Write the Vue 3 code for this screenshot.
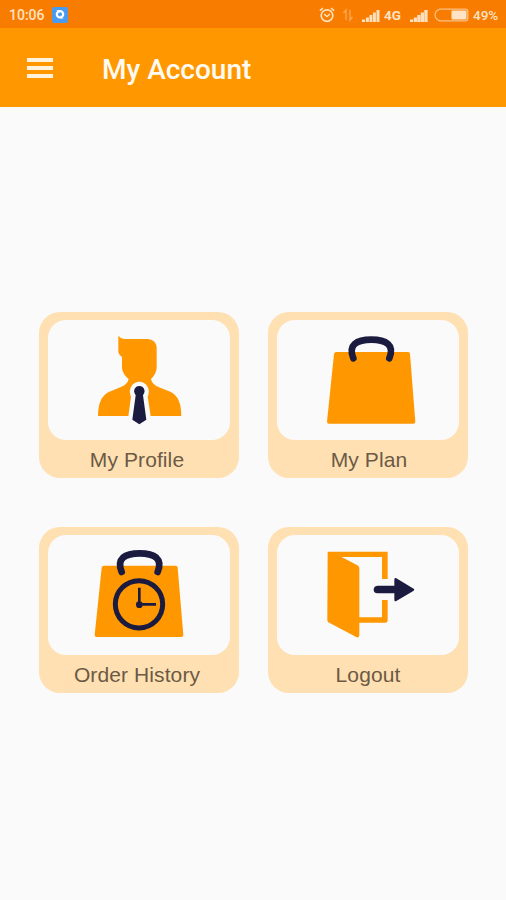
<script setup>
const items = [
  { id: 'profile', label: 'My Profile' },
  { id: 'plan', label: 'My Plan' },
  { id: 'history', label: 'Order History' },
  { id: 'logout', label: 'Logout' },
]
</script>

<template>
  <div class="screen">
    <div class="status">
      <span class="time">10:06</span>
      <svg class="app-icon" width="16" height="16" viewBox="0 0 16 16">
        <rect width="16" height="16" rx="2" fill="#4a9af0" />
        <path d="M4.500 3.200h3v3zM11.500 11.400h-3v-3z" fill="#fff" />
        <circle cx="8" cy="7.300" r="3.200" fill="none" stroke="#fff" stroke-width="2.200" />
      </svg>
      <div class="spacer"></div>
      <svg class="alarm" width="16" height="16" viewBox="0 0 16 16" fill="none" stroke="#ffe0bd">
        <circle cx="8" cy="8.600" r="5.800" stroke-width="1.700" />
        <path d="M.9 3.600L4 1.100M15.100 3.600L12 1.100" stroke-width="1.700" />
        <path d="M5.200 7.200L8 9.500l3-2.500" stroke-width="1.600" />
      </svg>
      <svg class="arrows" width="12" height="14" viewBox="0 0 12 14" fill="none" stroke="#fba650" stroke-width="1.400">
        <path d="M4 12V2L1.500 5M8 2v10L10.500 9" />
      </svg>
      <svg class="signal" width="18" height="13" viewBox="0 0 18 13" fill="#ffe0bd">
        <path d="M0 10.500h3.200V13H0zM4 8.500h2.900V13H4zM7.500 6h2.900v7H7.500zM11 3.500h2.900V13H11zM14.500 1h3v12h-3z" />
      </svg>
      <span class="net">4G</span>
      <svg class="signal second" width="18" height="13" viewBox="0 0 18 13" fill="#ffe0bd">
        <path d="M0 10.500h3.200V13H0zM3.800 8.500H7V13H3.800zM7.300 6h3.200v7H7.300zM10.800 3.500h3.200V13h-3.200zM14.300 1h3.300v12h-3.300z" />
      </svg>
      <svg class="battery" width="35" height="14" viewBox="0 0 35 14">
        <path d="M6 1.200h25.500q2.300 0 2.300 2.300v7q0 2.300-2.300 2.300H6Q1.200 11.500 1 7 1.200 2.500 6 1.200z" fill="none" stroke="#fcc084" stroke-width="1.300" />
        <rect x="17.500" y="2.500" width="15" height="9" rx="1" fill="#ffe3c4" />
      </svg>
      <span class="percent">49%</span>
    </div>

    <header class="toolbar">
      <button class="menu" aria-label="Menu">
        <i></i>
        <i></i>
        <i></i>
      </button>
      <h1>My Account</h1>
    </header>

    <main class="grid">
      <div v-for="item in items" :key="item.id" class="card">
        <div class="picture">
          <svg v-if="item.id === 'profile'" viewBox="39 36 546 360">
            <path
              fill="#ff9800"
              d="M250 83q7 9 17 10h72q26 3 26 28v60q-2 18-17 32 3 16 24 25l34 13q33 15 33 73H189q0-58 34-73l33-13q22-9 25-25-18-14-20-32v-34q-12-8-11-20z"
            />
            <path fill="#fafafa" d="M280 325l8-59q-8-18 2-33 9-12 23-12t23 12q10 15 2 33l9 59v6h-67z" />
            <path fill="#1b1b40" d="M304 236q9-4 18 0 12 10 2 26l10 73-21 14-21-14 10-73q-10-16 2-26z" />
          </svg>

          <svg v-else-if="item.id === 'plan'" viewBox="39 36 546 360">
            <path fill="#ff9800" d="M217 132h215q6 0 6 6l16 203q0 6-6 6H195q-6 0-6-6l21-203q1-6 7-6z" />
            <path class="handle" d="M268 151c-8-20-6-34 4-43 12-10 30-13 50-13s38 3 50 13c10 9 12 23 4 43" />
          </svg>

          <svg v-else-if="item.id === 'history'" viewBox="39 36 546 360">
            <path fill="#ff9800" d="M207 128h215q6 0 6 6l17 202q0 6-6 6H185q-6 0-6-6l21-202q1-6 7-6z" />
            <path class="handle" d="M260 147c-8-20-6-34 4-43 12-10 30-13 50-13s38 3 50 13c10 9 12 23 4 43" />
            <circle cx="312" cy="244" r="71" fill="none" stroke="#1b1b40" stroke-width="15" />
            <path d="M313 194v50h50" fill="none" stroke="#1b1b40" stroke-width="8" />
            <circle cx="313" cy="245" r="10" fill="#1b1b40" />
          </svg>

          <svg v-else viewBox="39 36 546 360">
            <path
              fill="#ff9800"
              d="M191 86h180v82h-17v-66H233l47 25q6 3 6 9v147h68v-52h17v60q0 8-8 8h-77v38q0 8-8 6l-85-45q-3-2-3-6z"
            />
            <path
              fill="#1b1b40"
              d="M340 188h51v-18q0-7 6-4l52 31q4 3 0 6l-52 31q-6 3-6-4v-19h-51q-11-1-11-11t11-12z"
            />
          </svg>
        </div>
        <span class="label">{{ item.label }}</span>
      </div>
    </main>
  </div>
</template>

<style>
body {
  background: #fafafa;
}
</style>

<style scoped>
.screen {
  width: 506px;
  height: 900px;
  overflow: hidden;
  background: #fafafa;
  font-family: Roboto, sans-serif;
}

.status {
  display: flex;
  align-items: center;
  box-sizing: border-box;
  height: 28px;
  padding: 2px 7px 0 9px;
  background: #f77c00;
  color: #ffe3c4;
  font-size: 14px;
  font-weight: 500;
}

.status svg {
  flex: none;
}

.app-icon {
  margin-left: 7px;
}

.spacer {
  flex: 1;
}

.alarm {
  margin-right: 7px;
}

.arrows {
  margin-right: 8px;
}

.signal {
  margin-right: 4px;
}

.net {
  width: 18px;
  margin-right: 8px;
  font-size: 13.5px;
  font-weight: 700;
}

.second {
  margin-right: 6px;
}

.battery {
  margin-right: 4px;
}

.percent {
  width: 26px;
  font-size: 13.5px;
  white-space: nowrap;
}

.toolbar {
  display: flex;
  align-items: center;
  box-sizing: border-box;
  height: 79px;
  padding: 4px 0 0 27px;
  background: #ff9800;
}

.menu {
  display: flex;
  flex-direction: column;
  gap: 4px;
  width: 26px;
  margin-bottom: 4px;
  padding: 0;
  border: 0;
  background: none;
}

.menu i {
  height: 4px;
  background: #fff3e0;
}

h1 {
  margin: 0 0 0 49px;
  color: #fffaf2;
  font-size: 28px;
  font-weight: 500;
  line-height: 32px;
}

.grid {
  display: grid;
  grid-template-columns: 200px 200px;
  gap: 49px 29px;
  padding: 205px 0 0 39px;
}

.card {
  display: flex;
  flex-direction: column;
  align-items: center;
  box-sizing: border-box;
  height: 166px;
  padding-top: 8px;
  border-radius: 21px;
  background: #ffe0b2;
}

.picture {
  width: 182px;
  height: 120px;
  border-radius: 18px;
  background: #fafafa;
}

.picture svg {
  display: block;
  width: 182px;
  height: 120px;
}

.handle {
  fill: none;
  stroke: #1b1b40;
  stroke-width: 20;
  stroke-linecap: round;
}

.label {
  color: #6b5a45;
  font-family: "Liberation Sans", Arial, sans-serif;
  font-size: 21px;
  letter-spacing: 0.1px;
  line-height: 40px;
}

.card:nth-child(odd) .label {
  margin-right: 4px;
}

.card:nth-child(2) .label {
  margin-left: 2px;
}
</style>
